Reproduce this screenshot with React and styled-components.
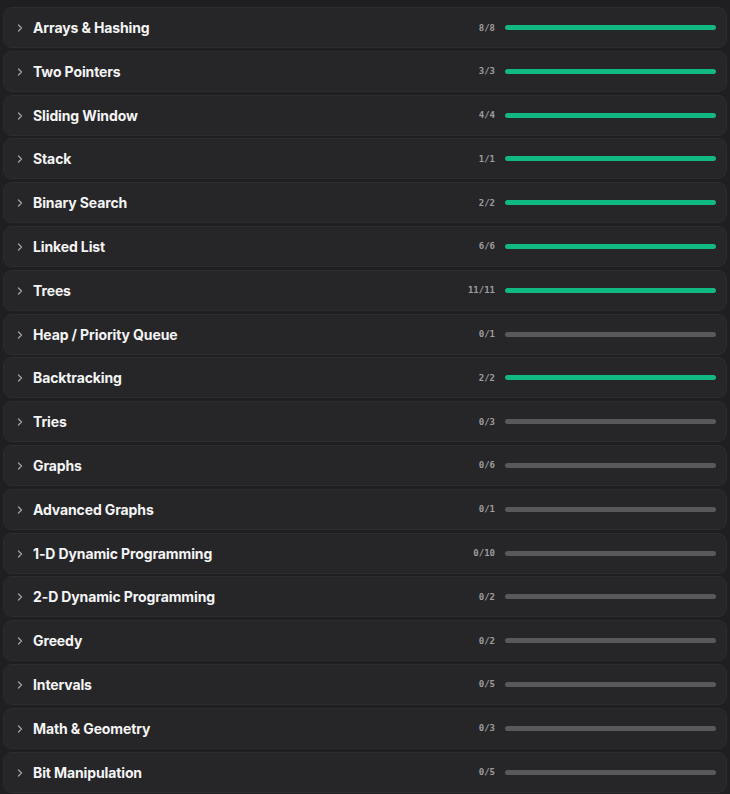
import React from "react";
import styled, { createGlobalStyle } from "styled-components";

const GlobalStyle = createGlobalStyle`
  html, body {
    margin: 0;
    padding: 0;
    background: #1f1f21;
  }
  body {
    font-family: Inter, "Noto Sans", sans-serif;
  }
`;

const topics = [
  { name: "Arrays & Hashing", done: 8, total: 8 },
  { name: "Two Pointers", done: 3, total: 3 },
  { name: "Sliding Window", done: 4, total: 4 },
  { name: "Stack", done: 1, total: 1 },
  { name: "Binary Search", done: 2, total: 2 },
  { name: "Linked List", done: 6, total: 6 },
  { name: "Trees", done: 11, total: 11 },
  { name: "Heap / Priority Queue", done: 0, total: 1 },
  { name: "Backtracking", done: 2, total: 2 },
  { name: "Tries", done: 0, total: 3 },
  { name: "Graphs", done: 0, total: 6 },
  { name: "Advanced Graphs", done: 0, total: 1 },
  { name: "1-D Dynamic Programming", done: 0, total: 10 },
  { name: "2-D Dynamic Programming", done: 0, total: 2 },
  { name: "Greedy", done: 0, total: 2 },
  { name: "Intervals", done: 0, total: 5 },
  { name: "Math & Geometry", done: 0, total: 3 },
  { name: "Bit Manipulation", done: 0, total: 5 },
];

const List = styled.div`
  display: flex;
  flex-direction: column;
  gap: 2.8px;
  padding: 7px 3px 0;
`;

const Row = styled.div`
  display: flex;
  align-items: center;
  height: 41px;
  box-sizing: border-box;
  padding: 0 10px 0 12px;
  background: #262628;
  border: 1px solid #2d2d2f;
  border-radius: 9px;
  cursor: pointer;
`;

const Chevron = styled.svg`
  width: 8px;
  height: 10px;
  flex-shrink: 0;
  margin-right: 9px;
  margin-top: 1px;
`;

const Title = styled.span`
  flex: 1;
  color: #f4f4f5;
  font-size: 14px;
  font-weight: 700;
  letter-spacing: -0.12px;
`;

const Count = styled.span`
  font-family: "DejaVu Sans Mono", "Liberation Mono", monospace;
  font-size: 9px;
  font-weight: 600;
  color: #9d9da0;
  margin-right: 10px;
`;

const Track = styled.div`
  width: 211px;
  height: 5px;
  border-radius: 3px;
  background: #59595c;
  overflow: hidden;
`;

const Fill = styled.div`
  height: 100%;
  background: #10b981;
  border-radius: 3px;
`;

const TopicRow = ({ topic }) => {
  const pct = topic.total ? (topic.done / topic.total) * 100 : 0;
  return (
    <Row>
      <Chevron viewBox="0 0 8 10">
        <path
          d="M2.5 2 L5.5 5 L2.5 8"
          fill="none"
          stroke="#a1a1a4"
          strokeWidth="1.3"
          strokeLinecap="round"
          strokeLinejoin="round"
        />
      </Chevron>
      <Title>{topic.name}</Title>
      <Count>
        {topic.done}/{topic.total}
      </Count>
      <Track>
        <Fill style={{ width: `${pct}%` }} />
      </Track>
    </Row>
  );
};

export default function App() {
  return (
    <>
      <GlobalStyle />
      <List>
        {topics.map((t) => (
          <TopicRow key={t.name} topic={t} />
        ))}
      </List>
    </>
  );
}
